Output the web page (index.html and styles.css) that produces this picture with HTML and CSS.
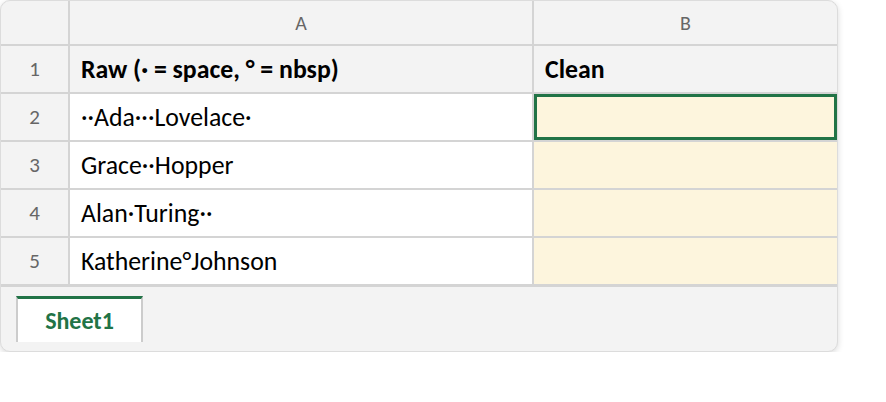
FILE: index.html
```html
<!DOCTYPE html>
<html>

<head>
  <title>Sheet</title>
  <link rel="stylesheet" href="styles.css">
</head>

<body>
  <div class="sheet">
    <div class="grid">
      <div class="corner"></div>
      <div class="col-head">A</div>
      <div class="col-head">B</div>

      <div class="row-head">1</div>
      <div class="cell head">Raw (· = space, ° = nbsp)</div>
      <div class="cell head">Clean</div>

      <div class="row-head">2</div>
      <div class="cell">··Ada···Lovelace·</div>
      <div class="cell out selected"></div>

      <div class="row-head">3</div>
      <div class="cell">Grace··Hopper</div>
      <div class="cell out"></div>

      <div class="row-head">4</div>
      <div class="cell">Alan·Turing··</div>
      <div class="cell out"></div>

      <div class="row-head">5</div>
      <div class="cell">Katherine°Johnson</div>
      <div class="cell out"></div>
    </div>
    <div class="tabs">
      <div class="tab">Sheet1</div>
    </div>
  </div>
</body>

</html>
```

FILE: styles.css
```css
body {
  margin: 0;
  padding: 0;
  background-color: #ffffff;
  font-family: Calibri, Carlito, "Open Sans", sans-serif;
}

.sheet {
  width: 836px;
  border: 1px solid #dcdcdc;
  border-radius: 10px;
  overflow: hidden;
  background-color: #f3f3f3;
  box-shadow: 0 2px 6px rgba(0, 0, 0, 0.15);
}

.grid {
  display: grid;
  grid-template-columns: 67px 462px 1fr;
  grid-template-rows: 43px repeat(5, 46px);
  gap: 2px;
  background-color: #d4d4d4;
}

.corner,
.col-head,
.row-head {
  background-color: #f3f3f3;
  color: #666666;
  display: flex;
  align-items: center;
  justify-content: center;
}

.col-head {
  font-size: 20px;
}

.row-head {
  font-size: 21px;
}

.cell {
  background-color: #ffffff;
  color: #000000;
  font-size: 25.8px;
  display: flex;
  align-items: center;
  padding-left: 11px;
}

.cell.head {
  background-color: #f3f3f3;
  font-weight: bold;
}

.cell.out {
  background-color: #fdf5dd;
}

.cell.selected {
  box-shadow: inset 0 0 0 3px #217346;
}

.tabs {
  border-top: 3px solid #d4d4d4;
  height: 67px;
  padding: 9px 0 0 15px;
  box-sizing: border-box;
}

.tab {
  width: 123px;
  height: 43px;
  background-color: #ffffff;
  border-top: 3px solid #217346;
  border-left: 2px solid #cccccc;
  border-right: 2px solid #cccccc;
  color: #217346;
  font-weight: bold;
  font-size: 24px;
  display: flex;
  align-items: center;
  justify-content: center;
}
```
